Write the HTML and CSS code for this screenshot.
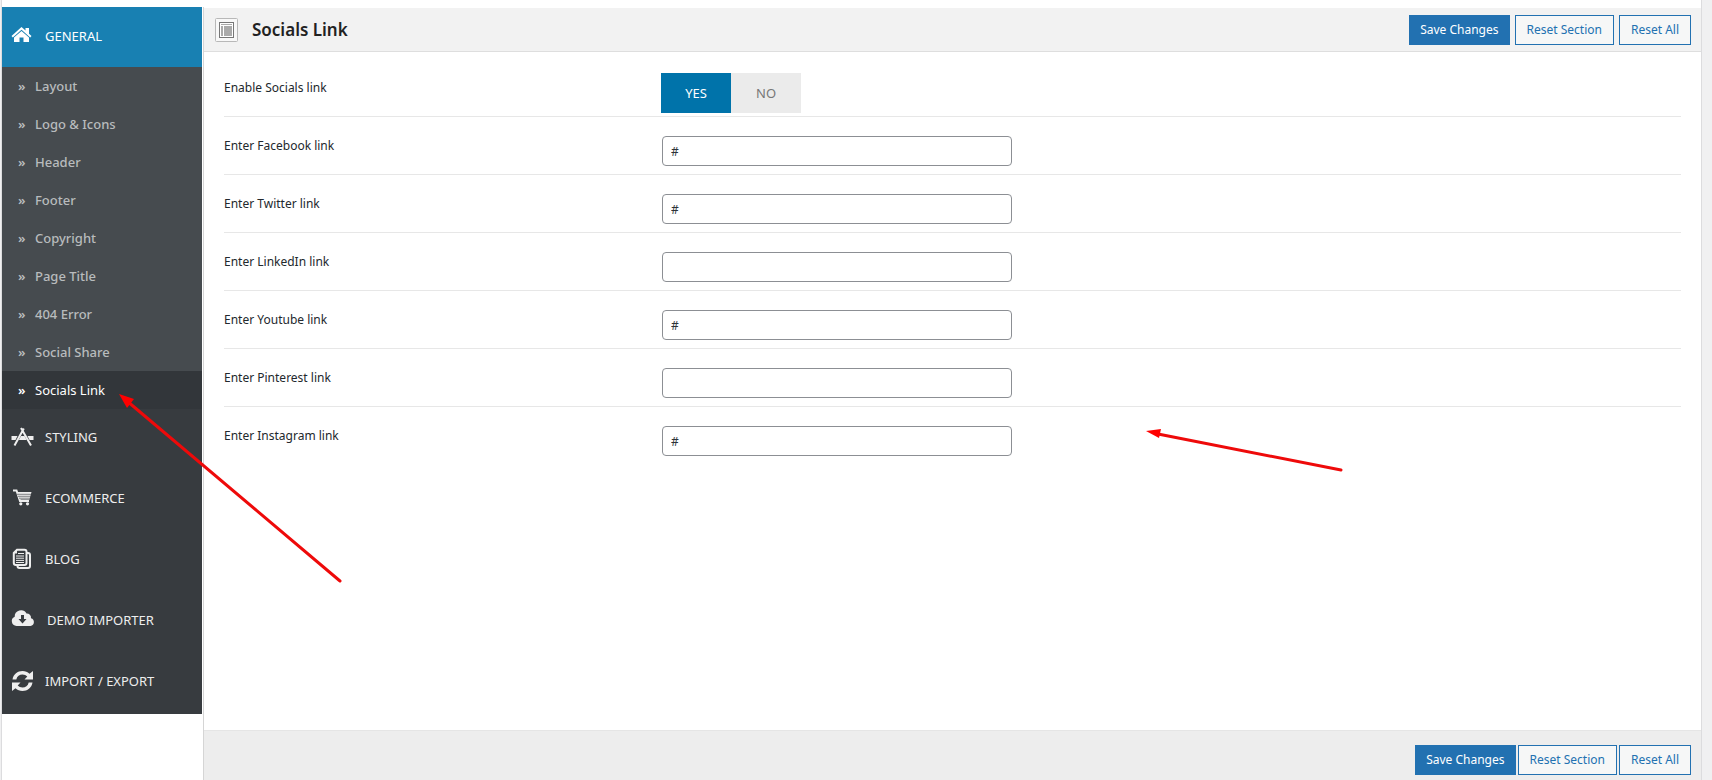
FILE: index.html
```html
<!DOCTYPE html>
<html lang="en">
<head>
    <meta charset="UTF-8">
    <meta name="viewport" content="width=device-width, initial-scale=1.0">
    <title>Socials Link</title>
    <link rel="stylesheet" href="styles.css">
</head>
<body>
    <div class="panel">
        <!-- Sidebar -->
        <nav class="sidebar">
            <a href="#general" class="menu-item active">
                <svg class="icon" viewBox="0 0 21 20"><path d="M9.500 1 13.500 4.600V2H17v5.700L19.500 10l-1.300 1.500L9.500 3.700.8 11.500-.5 10z"/><path d="M9.500 5 17 11.500V16h-5.500v-4.500h-4V16H2v-4.500z"/></svg>
                <span>GENERAL</span>
            </a>
            <ul class="submenu">
                <li><a href="#layout"><span class="mark">»</span>Layout</a></li>
                <li><a href="#logo"><span class="mark">»</span>Logo &amp; Icons</a></li>
                <li><a href="#header"><span class="mark">»</span>Header</a></li>
                <li><a href="#footer"><span class="mark">»</span>Footer</a></li>
                <li><a href="#copyright"><span class="mark">»</span>Copyright</a></li>
                <li><a href="#page-title"><span class="mark">»</span>Page Title</a></li>
                <li><a href="#error"><span class="mark">»</span>404 Error</a></li>
                <li><a href="#share"><span class="mark">»</span>Social Share</a></li>
                <li><a href="#socials" class="current"><span class="mark">»</span>Socials Link</a></li>
            </ul>
            <a href="#styling" class="menu-item">
                <svg class="icon" viewBox="0 0 21 20"><path d="M-.5 9h6l-2 4h-4zM9 9h3.500l2.200 4H6.800zM15.500 9h6v4h-4z"/><path class="line" d="M11.800 1.500 2.500 18.500M9 1l10 17.500"/></svg>
                <span>STYLING</span>
            </a>
            <a href="#ecommerce" class="menu-item">
                <svg class="icon" viewBox="0 0 21 20"><path class="line" d="M1 2.500h3.500L8 13h9"/><path d="M5.500 4H19.500l-2 7.500H8z"/><path class="cut" d="M5 6.300h15M6 8.300h13M7 10.200h12"/><circle cx="8.800" cy="15.800" r="1.600"/><circle cx="15.500" cy="15.800" r="1.600"/></svg>
                <span>ECOMMERCE</span>
            </a>
            <a href="#blog" class="menu-item">
                <svg class="icon" viewBox="0 0 21 20"><path class="line" d="M5 .8h7.500q2 0 2 2V14q0 2-2 2H4q-2.200 0-2.200-2V4z"/><path class="line" d="M15 4h1q2 0 2 2v11q0 2-2 2H7.500q-2 0-2-2v-1"/><path class="thin" d="M6 4.500h6M4 7h8M4 9.200h8M4 11.400h8M4 13.500h8"/><path d="M5 1v3.500H1.500z"/></svg>
                <span>BLOG</span>
            </a>
            <a href="#demo" class="menu-item">
                <svg class="icon wide" viewBox="0 0 23 20"><path fill-rule="evenodd" d="M4.500 16a4.800 4.800 0 0 1-1.800-9.200A6.300 6.300 0 0 1 14.500 3.500a4.200 4.200 0 0 1 4.500 4.700A4 4 0 0 1 18.500 16zM9 5v4H6.500l4 4.500 4-4.500H12V5z"/></svg>
                <span>DEMO IMPORTER</span>
            </a>
            <a href="#import" class="menu-item">
                <svg class="icon" viewBox="0 0 21 20"><path d="M.5 8.500C1.500 3 5.500 0 10.500 0c2.800 0 5 1 7 2.700L21 0v8.500h-8.500l2.800-3C14 4.300 12.500 3.500 10.500 3.500 7.500 3.500 5 5.200 4.300 8.500zM20.500 11.500c-1 5.500-5 8.500-10 8.500-2.800 0-5-1-7-2.700L0 20v-8.500h8.500l-2.800 3c1.300 1.200 2.800 2 4.800 2 3 0 5.500-1.700 6.200-5z"/></svg>
                <span>IMPORT / EXPORT</span>
            </a>
        </nav>

        <!-- Settings -->
        <form class="content">
            <header class="bar">
                <svg class="title-icon" viewBox="0 0 23 24"><rect class="frame" x=".5" y=".5" width="22" height="23" rx="1"/><rect class="window" x="4.500" y="4.500" width="14" height="15"/><path class="fill" d="M6 6h11v1H6zM6 8h2v10H6zM9 8h8v10H9z"/></svg>
                <h1>Socials Link</h1>
                <div class="buttons">
                    <button type="submit" class="primary">Save Changes</button>
                    <button type="button">Reset Section</button>
                    <button type="button">Reset All</button>
                </div>
            </header>

            <div class="fields">
                <div class="row">
                    <span class="name" id="enable-label">Enable Socials link</span>
                    <div class="toggle" role="radiogroup" aria-labelledby="enable-label">
                        <input type="radio" name="enable" id="enable-yes" checked>
                        <label for="enable-yes">YES</label>
                        <input type="radio" name="enable" id="enable-no">
                        <label for="enable-no">NO</label>
                    </div>
                </div>
                <div class="row">
                    <label class="name" for="facebook">Enter Facebook link</label>
                    <input type="text" id="facebook" value="#">
                </div>
                <div class="row">
                    <label class="name" for="twitter">Enter Twitter link</label>
                    <input type="text" id="twitter" value="#">
                </div>
                <div class="row">
                    <label class="name" for="linkedin">Enter LinkedIn link</label>
                    <input type="text" id="linkedin">
                </div>
                <div class="row">
                    <label class="name" for="youtube">Enter Youtube link</label>
                    <input type="text" id="youtube" value="#">
                </div>
                <div class="row">
                    <label class="name" for="pinterest">Enter Pinterest link</label>
                    <input type="text" id="pinterest">
                </div>
                <div class="row">
                    <label class="name" for="instagram">Enter Instagram link</label>
                    <input type="text" id="instagram" value="#">
                </div>
            </div>

            <footer class="bar bottom">
                <div class="buttons">
                    <button type="submit" class="primary">Save Changes</button>
                    <button type="button">Reset Section</button>
                    <button type="button">Reset All</button>
                </div>
            </footer>
        </form>
    </div>

    <!-- Pointer arrows -->
    <svg class="arrow arrow-menu" viewBox="0 0 224 190"><path class="shaft" d="M8 7 221 187"/><path class="head" d="M0 0 15 5 8 14z"/></svg>
    <svg class="arrow arrow-form" viewBox="0 0 198 42"><path class="shaft" d="M12 3 195 39"/><path class="head" d="M0 0 15-2 13 7z"/></svg>
</body>
</html>
```
FILE: styles.css
```css
/* Global Styles */
* {
    margin: 0;
    padding: 0;
    box-sizing: border-box;
    font-family: 'Noto Sans', 'Open Sans', sans-serif;
}

body {
    background-color: #f0f0f1;
    position: relative;
    overflow-x: hidden;
    font-size: 12px;
    color: #23282d;
}

.panel {
    display: flex;
    min-height: 100vh;
    margin: 0 10px 0 1px;
    padding-top: 7px;
    background-color: #ffffff;
    border-left: 1px solid #dcdcde;
    border-right: 1px solid #dcdcde;
}

/* Sidebar */
.sidebar {
    width: 200px;
    flex-shrink: 0;
}

.sidebar a {
    display: flex;
    align-items: center;
    text-decoration: none;
}

.menu-item {
    height: 61px;
    padding: 0 0 5px 10px;
    gap: 12px;
    background-color: #373b3f;
    color: #eeeeee;
    font-size: 13px;
}

.menu-item.active {
    height: 60px;
    padding-bottom: 3px;
    background-color: #1880b2;
    color: #ffffff;
}

.icon {
    width: 21px;
    height: 20px;
    fill: currentColor;
    overflow: visible;
}

.icon.wide {
    width: 23px;
}

.icon .line {
    fill: none;
    stroke: currentColor;
    stroke-width: 2;
}

.icon .thin {
    fill: none;
    stroke: currentColor;
    stroke-width: 1;
}

.icon .cut {
    stroke: #373b3f;
    stroke-width: 1;
    opacity: 0.6;
}

.submenu {
    list-style: none;
    background-color: #464b4f;
}

.submenu a {
    height: 38px;
    padding-left: 16px;
    color: #b8bbbd;
    font-size: 13px;
    font-weight: 500;
}

.submenu .mark {
    width: 17px;
    font-weight: 600;
}

.submenu .current {
    background-color: #32363a;
    color: #ffffff;
    font-weight: 400;
}

/* Content */
.content {
    flex: 1;
    display: flex;
    flex-direction: column;
    margin-left: 1px;
    border-left: 1px solid #d5d5d5;
}

.bar {
    display: flex;
    align-items: center;
    margin-top: 1px;
    height: 44px;
    padding: 0 10px 0 11px;
    background-color: #f2f2f2;
    border-bottom: 1px solid #dedede;
}

.bar.bottom {
    height: 50px;
    margin-top: auto;
    padding-top: 8px;
    background-color: #ededed;
    border-top: 1px solid #e5e5e5;
    border-bottom: none;
}

.title-icon {
    width: 23px;
    height: 24px;
    margin-right: 14px;
}

.title-icon .frame {
    fill: #f8f8f8;
    stroke: #b8b8b8;
}

.title-icon .window {
    fill: #ffffff;
    stroke: #777777;
}

.title-icon .fill {
    fill: #aaaaaa;
}

.bar h1 {
    font-size: 17px;
    line-height: 24px;
    font-weight: 600;
    color: #222222;
}

.buttons {
    display: flex;
    gap: 5px;
    margin-left: auto;
}

.bottom .buttons {
    gap: 2px;
}

.buttons button {
    height: 30px;
    padding: 0 10px;
    background-color: #f6f7f7;
    border: 1px solid #2271b1;
    color: #2271b1;
    font-size: 12px;
    cursor: pointer;
}

.buttons button:not(.primary) {
    padding: 0 11px;
}

.buttons .primary {
    background-color: #2271b1;
    color: #ffffff;
}

.fields {
    padding: 7px 20px 20px;
}

.row {
    display: flex;
    align-items: flex-start;
    height: 58px;
    border-bottom: 1px solid #e7e7e7;
}

.row:last-child {
    border-bottom: none;
}

.row .name {
    width: 30%;
    padding-top: 20px;
    line-height: 18px;
}

.row input[type="text"] {
    width: 350px;
    height: 30px;
    margin: 19px 0 0 1px;
    padding: 0 8px;
    background-color: #ffffff;
    border: 1px solid #8c8f94;
    border-radius: 4px;
    color: #2c3338;
    font-size: 12px;
}

.toggle {
    display: flex;
    position: relative;
    margin-top: 14px;
}

.toggle input {
    position: absolute;
    opacity: 0;
}

.toggle label {
    width: 70px;
    line-height: 40px;
    background-color: #ebebeb;
    color: #777777;
    font-size: 13px;
    text-align: center;
    cursor: pointer;
}

.toggle input:checked + label {
    background-color: #0073aa;
    color: #ffffff;
}

/* Arrows */
.arrow {
    position: absolute;
    overflow: visible;
    pointer-events: none;
}

.arrow-menu {
    left: 119px;
    top: 394px;
    width: 224px;
}

.arrow-form {
    left: 1146px;
    top: 431px;
    width: 198px;
}

.arrow .shaft {
    stroke: #ee0a0a;
    stroke-width: 3;
    stroke-linecap: round;
}

.arrow .head {
    fill: #ff0000;
}
```
